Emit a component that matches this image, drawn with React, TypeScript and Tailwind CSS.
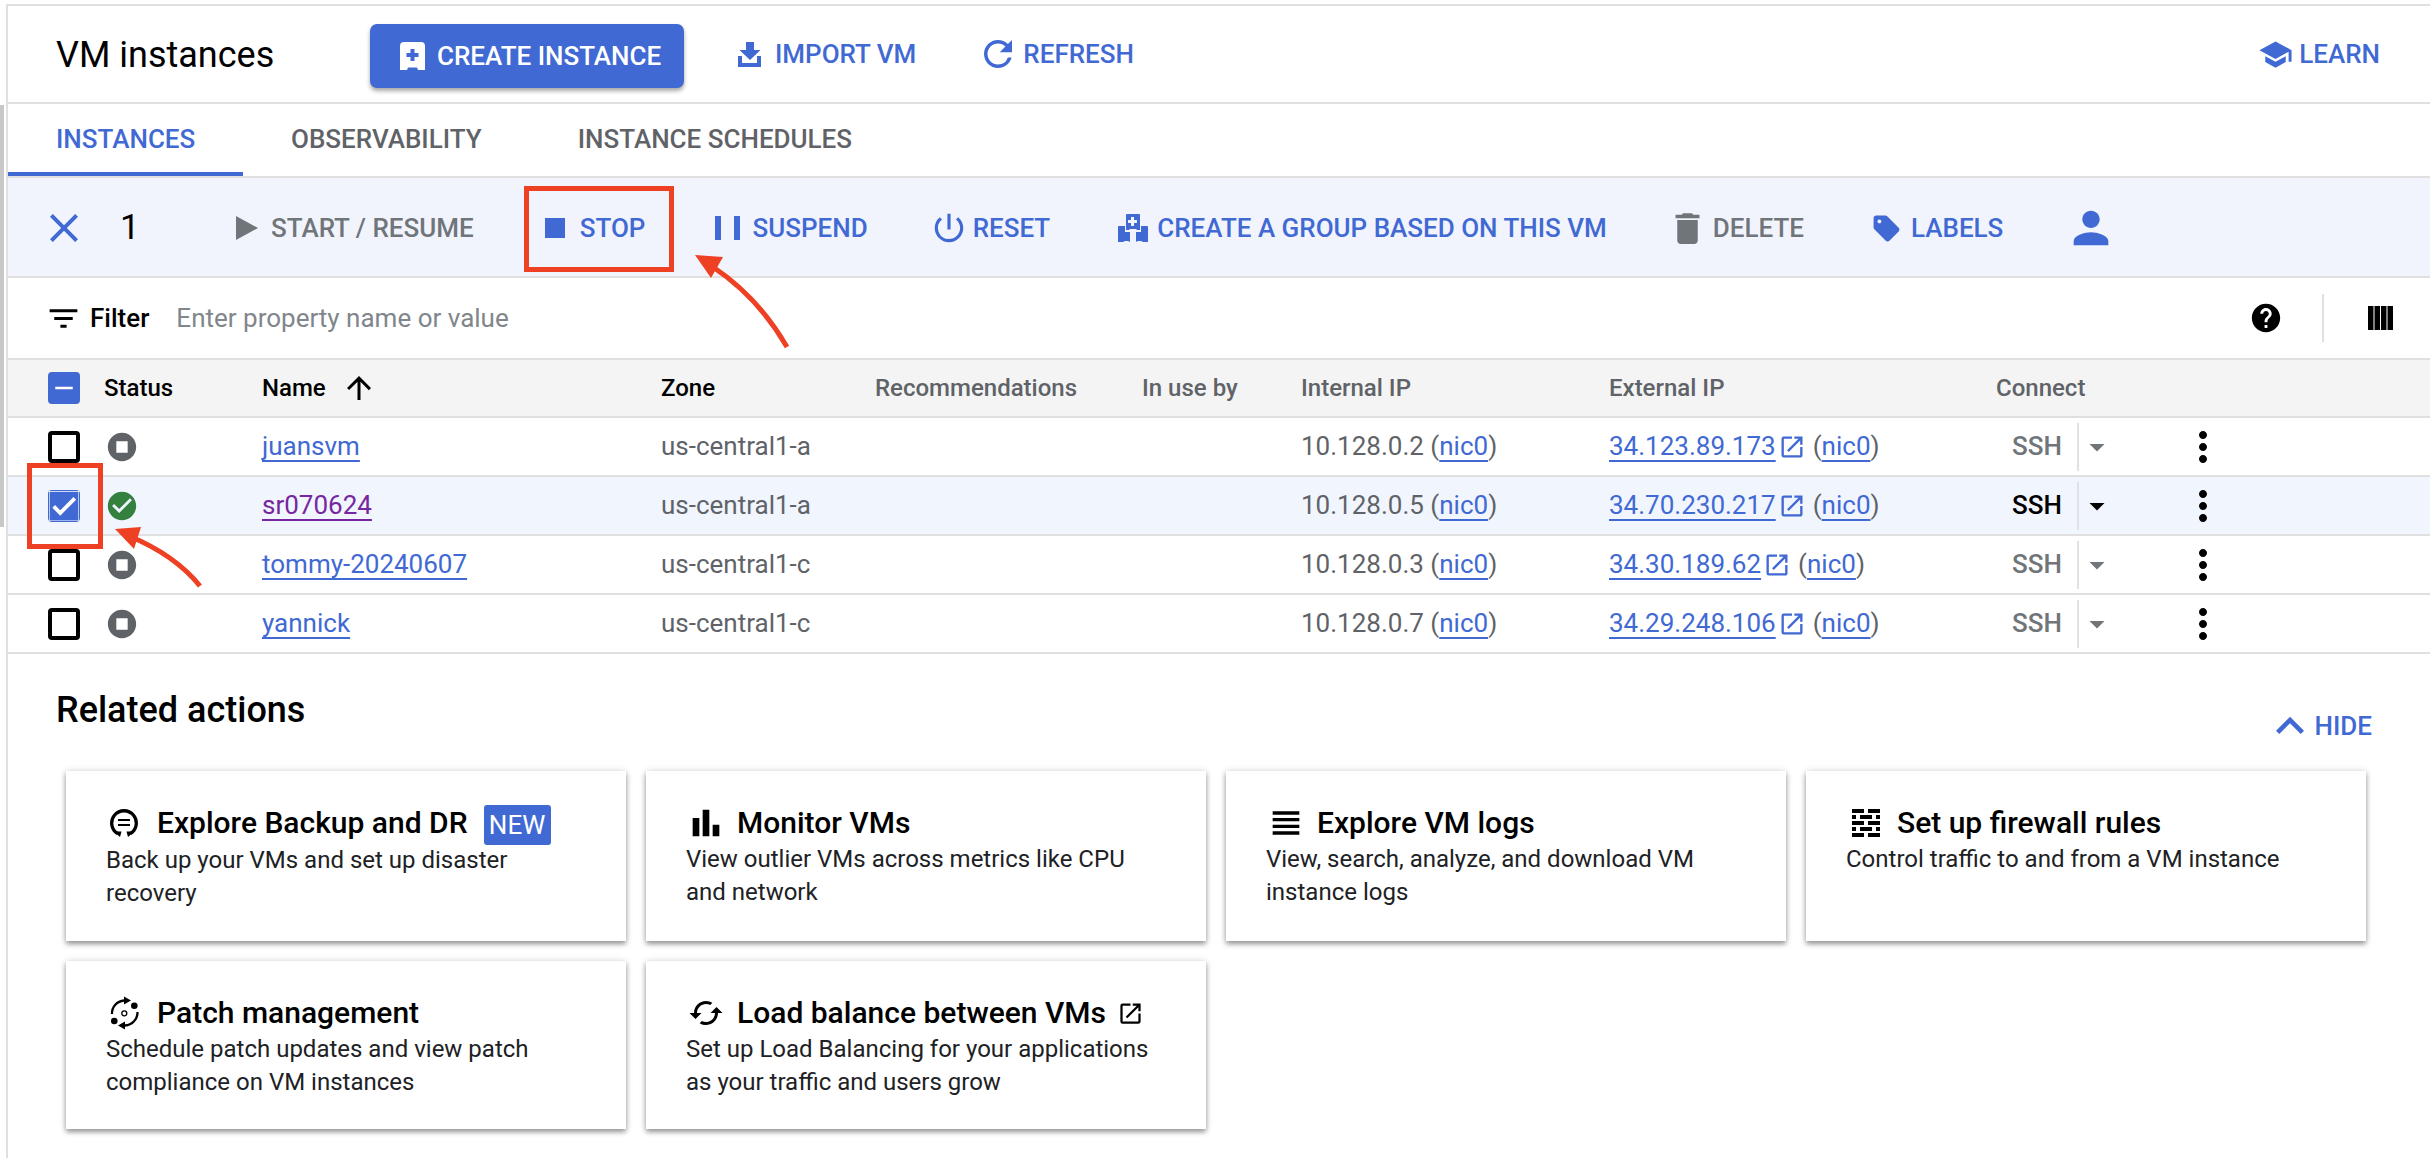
import type { ReactNode } from 'react'
import {
  MdArrowDropDown,
  MdArrowUpward,
  MdBarChart,
  MdCached,
  MdCheck,
  MdCheckCircle,
  MdClose,
  MdDelete,
  MdExpandLess,
  MdFilterList,
  MdHelp,
  MdMoreVert,
  MdOpenInNew,
  MdPerson,
  MdPowerSettingsNew,
  MdRefresh,
  MdRemove,
  MdSchool,
  MdSell,
  MdStop,
  MdStopCircle,
  MdViewHeadline,
} from 'react-icons/md'

const VMS = [
  { name: 'juansvm', zone: 'us-central1-a', internal: '10.128.0.2', external: '34.123.89.173', selected: false },
  { name: 'sr070624', zone: 'us-central1-a', internal: '10.128.0.5', external: '34.70.230.217', selected: true },
  { name: 'tommy-20240607', zone: 'us-central1-c', internal: '10.128.0.3', external: '34.30.189.62', selected: false },
  { name: 'yannick', zone: 'us-central1-c', internal: '10.128.0.7', external: '34.29.248.106', selected: false },
]

const GRID = 'grid grid-cols-[96px_158px_399px_214px_267px_159px_308px_387px_1fr] items-center'

function BackupIcon() {
  return (
    <svg viewBox="0 0 28 28" className="w-[28px] h-[28px] -translate-x-[2px]" fill="none" stroke="currentColor">
      <path d="M7.500 24.500A12.300 12.300 0 1 1 20.500 24.500" strokeWidth="3.300" />
      <path d="M8 11h12M8 16h12" strokeWidth="2" />
      <path d="M3.500 22.500h8l-1.500 5.500zM16.500 22.500h8l-6.500 5.500z" fill="currentColor" stroke="none" />
    </svg>
  )
}

function PatchIcon() {
  return (
    <svg viewBox="8 5 32 36" className="w-[32px] h-[36px] shrink-0 -translate-x-[1px]" fill="none" stroke="currentColor">
      <circle cx="23.300" cy="23.300" r="2.500" strokeWidth="1.300" />
      <circle cx="33.300" cy="15.700" r="3.300" fill="currentColor" stroke="none" />
      <circle cx="13.300" cy="31" r="3.300" fill="currentColor" stroke="none" />
      <path d="M11 24A13 13 0 0 1 23 10.500" strokeWidth="2.300" />
      <path d="M36.500 22A13 13 0 0 1 24 35.500" strokeWidth="2.300" />
      <path d="M30 10.500L23 6.500V14.500ZM17 35.500L24 31.500V39.500Z" fill="currentColor" stroke="none" />
    </svg>
  )
}

function FirewallIcon() {
  return (
    <svg viewBox="0 0 28 28" className="w-[28px] h-[28px]" fill="currentColor">
      <path d="M0 0h12v4H0zM16 0h12v4H16zM0 6h4v4H0zM8 6h12v4H8zM24 6h4v4h-4zM0 12h12v4H0zM16 12h12v4H16zM0 18h4v4H0zM8 18h12v4H8zM24 18h4v4h-4zM0 24h12v4H0zM16 24h12v4H16z" />
    </svg>
  )
}

function CreateIcon() {
  return (
    <svg viewBox="0 0 25 28" className="w-[25px] h-[28px]" fill="currentColor">
      <path
        fillRule="evenodd"
        d="M4 0h17a4 4 0 0 1 4 4v24h-7l-1-2.500H8L7 28H0V4a4 4 0 0 1 4-4zM10.500 7v4h-4v4h4v4h4v-4h4v-4h-4V7z"
      />
    </svg>
  )
}

function ImportIcon() {
  return (
    <svg viewBox="0 0 23 25" className="w-[23px] h-[25px]" fill="currentColor">
      <path d="M8 0h8v8h6.500L12 18 1.500 8H8zM0 14h4v7h15v-7h4v11H0z" />
    </svg>
  )
}

function PlayIcon() {
  return (
    <svg viewBox="0 0 22 24" className="w-[22px] h-[24px]" fill="currentColor">
      <path d="M0 0L22 12L0 24Z" />
    </svg>
  )
}

function PauseIcon() {
  return (
    <svg viewBox="0 0 25 24" className="w-[25px] h-[24px]" fill="currentColor">
      <path d="M0 0h6v24H0zM19 0h6v24h-6z" />
    </svg>
  )
}

function GroupIcon() {
  return (
    <svg viewBox="0 0 34 32" className="w-[34px] h-[32px]" fill="currentColor">
      <path fillRule="evenodd" d="M11 2h12a1 1 0 0 1 1 1v15h-3l-1-1h-6l-1 1h-3V3a1 1 0 0 1 1-1zM15 5v3h-3v3h3v3h3v-3h3V8h-3V5z" />
      <path d="M3 14h6v6h5v10l-2-1-3 0-2 1H2V15a1 1 0 0 1 1-1zM25 14h6a1 1 0 0 1 1 1v15h-5l-2-1-3 0-2 1V20h5z" />
    </svg>
  )
}

function ColumnsIcon() {
  return (
    <svg viewBox="0 0 25 24" className="w-[25px] h-[24px]" fill="currentColor">
      <path d="M0 0h5.500v24H0zM6.500 0h5.500v24H6.500zM13 0h5.500v24H13zM19.500 0h5.500v24h-5.500z" />
    </svg>
  )
}

function BlueLink({ children, purple }: { children: ReactNode; purple?: boolean }) {
  return (
    <span className={`underline decoration-2 underline-offset-[5px] [text-decoration-skip-ink:none] ${purple ? 'text-[#7627a0]' : 'text-[#4169d4]'}`}>
      {children}
    </span>
  )
}

function ActionButton({ icon, label, muted, className }: { icon: ReactNode; label?: string; muted?: boolean; className?: string }) {
  return (
    <div className={`flex items-center font-medium text-[26px] whitespace-nowrap ${muted ? 'text-[#70757a]' : 'text-[#4169d4]'} ${className ?? ''}`}>
      {icon}
      {label && <span>{label}</span>}
    </div>
  )
}

function Checkbox({ state }: { state: 'off' | 'on' | 'mixed' }) {
  if (state === 'off') {
    return <div className="w-[32px] h-[32px] rounded-[4px] border-[4px] border-black bg-white" />
  }
  return (
    <div className="w-[32px] h-[32px] rounded-[4px] bg-[#4169d4] flex items-center justify-center text-white">
      {state === 'on' ? <MdCheck size={30} stroke="currentColor" strokeWidth={1} /> : <MdRemove size={30} />}
    </div>
  )
}

function ActionCard({ icon, title, extra, desc, descClass }: { icon: ReactNode; title: string; extra?: ReactNode; desc: ReactNode; descClass?: string }) {
  return (
    <div className="bg-white pl-[40px] pr-[30px] pt-[36px] shadow-[0_3px_5px_rgba(0,0,0,0.38),0_0_8px_rgba(0,0,0,0.12)]">
      <div className="flex items-center h-[32px] gap-[12px] text-black">
        <span className="flex items-center justify-center w-[39px] h-[32px] shrink-0">{icon}</span>
        <span className="text-[30px] font-medium leading-none whitespace-nowrap">{title}</span>
        {extra}
      </div>
      <div className={`text-[24px] leading-[32.500px] text-[#202124] ${descClass ?? 'mt-[4px]'}`}>{desc}</div>
    </div>
  )
}

export default function App() {
  return (
    <div className="relative w-[2430px] h-[1158px] overflow-hidden bg-white font-['Roboto',sans-serif]">
      {/* Page header */}
      <div className="mt-[4px] ml-[6px] h-[100px] flex items-center pl-[48px] pr-[50px] border-t-[2px] border-b-[2px] border-l-[2px] border-[#e0e0e0]">
        <h1 className="text-[36px] font-normal text-black w-[314px] leading-none mt-[2px]">VM instances</h1>
        <button className="flex items-center gap-[12px] w-[314px] h-[64px] mt-[4px] rounded-[7px] bg-[#4169d4] text-white text-[26px] font-medium pl-[30px] shadow-[0_3px_4px_rgba(0,0,0,0.35)]">
          <CreateIcon />
          <span>CREATE INSTANCE</span>
        </button>
        <ActionButton className="ml-[54px] gap-[14px]" icon={<ImportIcon />} label="IMPORT VM" />
        <ActionButton className="ml-[61px] gap-[4px]" icon={<MdRefresh size={42} />} label="REFRESH" />
        <ActionButton className="ml-auto gap-[6px]" icon={<MdSchool size={35} />} label="LEARN" />
      </div>

      <div className="ml-[6px] h-[1054px] border-l-[2px] border-[#e0e0e0]">
        {/* Tabs */}
        <div className="flex h-[74px] border-b-[2px] border-[#e0e0e0] text-[26px] font-medium text-[#5f6368]">
          <div className="w-[235px] h-[72px] flex items-center pl-[48px] pt-[2px] text-[#4169d4] border-b-[4px] border-[#4169d4]">INSTANCES</div>
          <div className="flex items-center ml-[48px] pb-[1px]">OBSERVABILITY</div>
          <div className="flex items-center ml-[96px] pb-[1px]">INSTANCE SCHEDULES</div>
        </div>

        {/* Selection actions */}
        <div className="flex items-center h-[100px] pl-[32px] pt-[2px] bg-[#f1f4fd] border-b-[2px] border-[#e0e0e0]">
          <MdClose size={48} className="text-[#4169d4]" />
          <span className="text-[35px] text-black ml-[32px] w-[116px]">1</span>
          <ActionButton muted icon={<PlayIcon />} label="START / RESUME" className="gap-[13px]" />
          <ActionButton icon={<MdStop size={40} />} label="STOP" className="ml-[61px] gap-[5px]" />
          <ActionButton icon={<PauseIcon />} label="SUSPEND" className="ml-[70px] gap-[12px]" />
          <ActionButton icon={<MdPowerSettingsNew size={38} />} label="RESET" className="ml-[62px] gap-[5px]" />
          <ActionButton icon={<GroupIcon />} label="CREATE A GROUP BASED ON THIS VM" className="ml-[66px] gap-[7px]" />
          <ActionButton muted icon={<MdDelete size={41} />} label="DELETE" className="ml-[60px] gap-[5px]" />
          <ActionButton icon={<MdSell size={31} />} label="LABELS" className="ml-[67px] gap-[9px]" />
          <ActionButton icon={<MdPerson size={52} />} className="ml-[62px]" />
        </div>

        {/* Filter */}
        <div className="flex items-center h-[82px] pl-[37px] pr-[37px] border-b-[2px] border-[#e0e0e0]">
          <MdFilterList size={37} className="text-black" />
          <span className="ml-[8px] text-[26px] font-medium text-black">Filter</span>
          <span className="ml-[27px] text-[26px] text-[#80868b]">Enter property name or value</span>
          <div className="ml-auto flex items-center h-[48px]">
            <MdHelp size={34} className="text-black" />
            <div className="w-[2px] h-[48px] bg-[#e0e0e0] ml-[39px]" />
            <span className="ml-[44px] text-black"><ColumnsIcon /></span>
          </div>
        </div>

        {/* Table header */}
        <div className={`${GRID} h-[58px] bg-[#f4f4f4] border-b-[2px] border-[#e0e0e0] text-[24px] font-medium text-[#5f6368]`}>
          <div className="pl-[40px]"><Checkbox state="mixed" /></div>
          <div className="text-black">Status</div>
          <div className="flex items-center text-black">Name<MdArrowUpward size={36} className="ml-[15px]" /></div>
          <div className="text-black">Zone</div>
          <div>Recommendations</div>
          <div>In use by</div>
          <div>Internal IP</div>
          <div>External IP</div>
          <div>Connect</div>
        </div>

        {/* VM rows */}
        {VMS.map(vm => (
          <div key={vm.name} className={`${GRID} h-[59px] border-b-[2px] border-[#e0e0e0] text-[26px] text-[#5f6368] ${vm.selected ? 'bg-[#f1f5fe]' : 'bg-white'}`}>
            <div className="pl-[40px]"><Checkbox state={vm.selected ? 'on' : 'off'} /></div>
            <div className="ml-[1px]">
              {vm.selected
                ? <MdCheckCircle size={34} className="text-[#34803f]" />
                : <MdStopCircle size={34} className="text-[#5f6368]" />}
            </div>
            <div><BlueLink purple={vm.selected}>{vm.name}</BlueLink></div>
            <div>{vm.zone}</div>
            <div />
            <div />
            <div className="whitespace-nowrap">{vm.internal} (<BlueLink>nic0</BlueLink>)</div>
            <div className="flex items-center whitespace-nowrap">
              <BlueLink>{vm.external}</BlueLink>
              <MdOpenInNew size={28} className="text-[#4169d4] ml-[2px]" />
              <span className="ml-[7px]">(<BlueLink>nic0</BlueLink>)</span>
            </div>
            <div className="flex items-center">
              <span className={`ml-[16px] w-[65px] font-medium ${vm.selected ? 'text-black' : 'text-[#70757a]'}`}>SSH</span>
              <div className="w-[2px] h-[48px] bg-[#dfe1e5]" />
              <MdArrowDropDown size={36} className={vm.selected ? 'text-black' : 'text-[#70757a]'} />
              <MdMoreVert size={48} className="text-black ml-[64px]" />
            </div>
          </div>
        ))}

        {/* Related actions */}
        <div className="flex items-start justify-between pl-[48px] pr-[58px] pt-[36px] h-[117px]">
          <h2 className="text-[36px] font-medium text-black leading-[40px]">Related actions</h2>
          <div className="flex items-center mt-[8px] text-[26px] font-medium text-[#4169d4]">
            <MdExpandLess size={56} className="-mr-[3px]" />
            <span>HIDE</span>
          </div>
        </div>

        <div className="grid grid-cols-[560px_560px_560px_560px] grid-rows-[170px_168px] gap-[20px] pl-[58px]">
          <ActionCard
            icon={<BackupIcon />}
            title="Explore Backup and DR"
            extra={<span className="flex items-center justify-center ml-[4px] mt-[4px] w-[67px] h-[40px] shrink-0 bg-[#4169d4] text-white text-[26px] rounded-[3px]">NEW</span>}
            descClass="mt-[5px]"
            desc={<>Back up your VMs and set up disaster<br />recovery</>}
          />
          <ActionCard
            icon={<MdBarChart size={40} className="shrink-0" />}
            title="Monitor VMs"
            desc={<>View outlier VMs across metrics like CPU<br />and network</>}
          />
          <ActionCard
            icon={<MdViewHeadline size={40} className="shrink-0" />}
            title="Explore VM logs"
            desc={<>View, search, analyze, and download VM<br />instance logs</>}
          />
          <ActionCard
            icon={<FirewallIcon />}
            title="Set up firewall rules"
            desc="Control traffic to and from a VM instance"
          />
          <ActionCard
            icon={<PatchIcon />}
            title="Patch management"
            desc={<>Schedule patch updates and view patch<br />compliance on VM instances</>}
          />
          <ActionCard
            icon={<MdCached size={36} className="shrink-0" />}
            title="Load balance between VMs"
            extra={<MdOpenInNew size={27} className="-ml-[1px]" />}
            desc={<>Set up Load Balancing for your applications<br />as your traffic and users grow</>}
          />
        </div>
      </div>

      {/* Tutorial annotations on top of the screenshot */}
      <div className="absolute left-0 top-[105px] w-[4px] h-[422px] bg-[#c8c8c8]" />
      <div className="absolute left-[524px] top-[186px] w-[150px] h-[86px] border-[5px] border-[#ee4023]" />
      <div className="absolute left-[27px] top-[463px] w-[76px] h-[86px] border-[5px] border-[#ee4023]" />
      <svg className="absolute left-[680px] top-[245px] w-[120px] h-[110px]" viewBox="0 0 120 110" fill="none">
        <path d="M107 102Q78 52 33 22" stroke="#ee4023" strokeWidth="5" />
        <path d="M15 10L43 12L31 33Z" fill="#ee4023" />
      </svg>
      <svg className="absolute left-[105px] top-[520px] w-[105px] h-[75px]" viewBox="0 0 105 75" fill="none">
        <path d="M95 66Q70 35 24 16" stroke="#ee4023" strokeWidth="5" />
        <path d="M10 9L36 7L29 29Z" fill="#ee4023" />
      </svg>
    </div>
  )
}
